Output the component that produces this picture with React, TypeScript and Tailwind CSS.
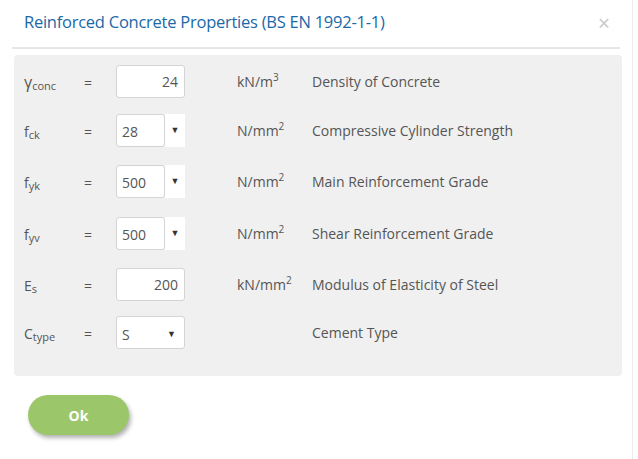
import React from "react";

const font = { fontFamily: '"Open Sans", "Noto Sans", sans-serif' };

function Arrow() {
  return <span className="text-[9px] text-[#333] leading-none">▼</span>;
}

function NumInput({ value }: { value: string }) {
  return (
    <div className="w-[69px] h-[33px] bg-white border border-[#d4d4d4] rounded-[3px] flex items-center justify-end pr-[6px] text-[14px] text-[#555]">
      {value}
    </div>
  );
}

function SplitSelect({ value }: { value: string }) {
  return (
    <div className="w-[69px] h-[33px] flex">
      <div className="w-[49px] h-[33px] bg-white border border-[#d4d4d4] rounded-[3px] flex items-center pl-[5px] pt-[2px] text-[14px] text-[#555]">
        {value}
      </div>
      <div className="w-[20px] h-[33px] bg-white flex items-center justify-center pb-[3px]">
        <Arrow />
      </div>
    </div>
  );
}

function FullSelect({ value }: { value: string }) {
  return (
    <div className="w-[69px] h-[33px] bg-white border border-[#d4d4d4] rounded-[3px] flex items-center justify-between pl-[5px] pr-[8px] text-[14px] text-[#555]">
      <span className="pt-[3px]">{value}</span>
      <span className="pb-[3px]">
        <Arrow />
      </span>
    </div>
  );
}

function Row({
  sym,
  sub,
  control,
  unit,
  sup,
  desc,
  mt,
  big,
}: {
  sym: string;
  sub: string;
  control: React.ReactNode;
  unit?: string;
  sup?: string;
  desc: string;
  mt: string;
  big?: boolean;
}) {
  return (
    <div className={`flex items-center h-[33px] ${mt}`}>
      <div className="w-[60px] text-[14px] text-[#555] pt-[1px]">
        <span className={big ? "text-[16px]" : ""}>{sym}</span>
        <span className="text-[11px] relative top-[2px]">{sub}</span>
      </div>
      <div className="w-[32px] text-[14px] text-[#555] pt-[2px]">=</div>
      {control}
      <div className="w-[52px]" />
      <div className="w-[75px] text-[14px] text-[#555]">
        {unit}
        {sup && <span className="text-[10px] relative top-[-6px]">{sup}</span>}
      </div>
      <div className="text-[14px] text-[#555]">{desc}</div>
    </div>
  );
}

export default function App() {
  return (
    <div style={font} className="w-[638px] h-[459px] bg-white overflow-hidden">
      <div className="w-[633px] h-[459px] border-r border-[#ececec]">
        <div className="mx-[12px] h-[49px] border-b-2 border-[#e6e6e6] flex items-start justify-between">
          <div className="pl-[12px] pt-[10px] text-[16.5px] text-[#1a68a8] tracking-[-0.25px]">
            Reinforced Concrete Properties (BS EN 1992-1-1)
          </div>
          <div className="pr-[10px] pt-[8px] text-[21px] text-[#c8c8c8]">×</div>
        </div>
        <div className="mx-[14px] w-[608px] mt-[6px] h-[321px] bg-[#f0f0f0] rounded-[4px] pl-[10px] pt-[10px]">
          <Row sym="γ" sub="conc" big control={<NumInput value="24" />} unit="kN/m" sup="3" desc="Density of Concrete" mt="" />
          <Row sym="f" sub="ck" control={<SplitSelect value="28" />} unit="N/mm" sup="2" desc="Compressive Cylinder Strength" mt="mt-[16px]" />
          <Row sym="f" sub="yk" control={<SplitSelect value="500" />} unit="N/mm" sup="2" desc="Main Reinforcement Grade" mt="mt-[18px]" />
          <Row sym="f" sub="yv" control={<SplitSelect value="500" />} unit="N/mm" sup="2" desc="Shear Reinforcement Grade" mt="mt-[19px]" />
          <Row sym="E" sub="s" control={<NumInput value="200" />} unit="kN/mm" sup="2" desc="Modulus of Elasticity of Steel" mt="mt-[18px]" />
          <Row sym="C" sub="type" control={<FullSelect value="S" />} desc="Cement Type" mt="mt-[15px]" />
        </div>
        <div className="pl-[28px] mt-[19px]">
          <button className="w-[101px] h-[40px] rounded-full bg-[#9bc76a] text-white font-bold text-[14px] shadow-[2px_3px_4px_rgba(0,0,0,0.3)]">
            Ok
          </button>
        </div>
      </div>
    </div>
  );
}
